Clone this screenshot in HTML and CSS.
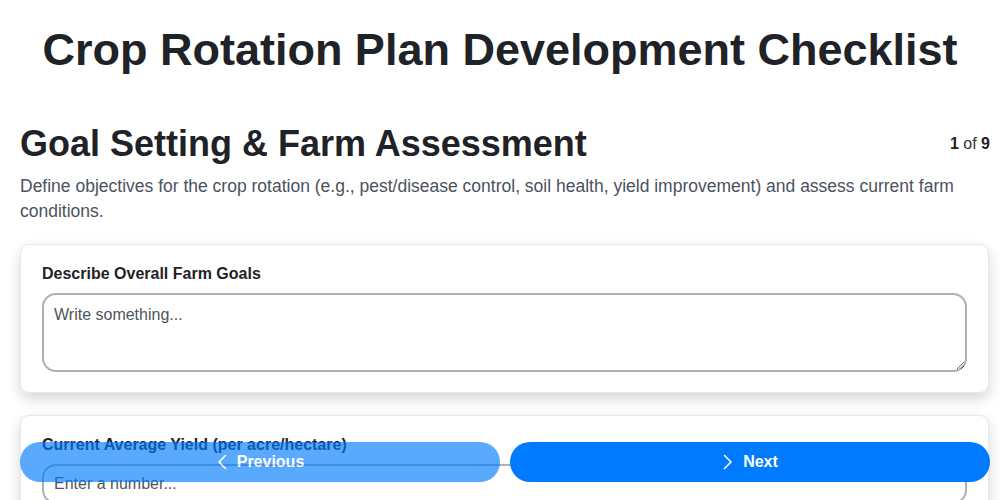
FILE: index.html
```html
<!DOCTYPE html>
<html lang="en">
<head>
<meta charset="utf-8">
<title>Crop Rotation Plan Development Checklist</title>
<link rel="stylesheet" href="styles.css">
</head>
<body>
<h1 class="title">Crop Rotation Plan Development Checklist</h1>
<main class="page">
  <section class="step">
    <header class="step-head">
      <h2 class="step-title">Goal Setting &amp; Farm Assessment</h2>
      <div class="step-count"><b>1</b> of <b>9</b></div>
    </header>
    <p class="step-desc">Define objectives for the crop rotation (e.g., pest/disease control, soil health, yield improvement) and assess current farm conditions.</p>
    <div class="fields">
      <div class="card">
        <label class="field-label" for="goals">Describe Overall Farm Goals</label>
        <textarea id="goals" class="textarea" placeholder="Write something..."></textarea>
      </div>
      <div class="card">
        <label class="field-label" for="yield">Current Average Yield (per acre/hectare)</label>
        <input id="yield" class="input" type="text" placeholder="Enter a number...">
      </div>
    </div>
  </section>
</main>
<nav class="nav">
  <button class="btn btn-prev" type="button" disabled>
    <svg class="chev" viewBox="0 0 12 16" width="12" height="16"><path d="M9.5 1.5 3 8l6.5 6.5" fill="none" stroke="currentColor" stroke-width="1.6" stroke-linecap="round" stroke-linejoin="round"/></svg>
    <span>Previous</span>
  </button>
  <button class="btn btn-next" type="button">
    <svg class="chev" viewBox="0 0 12 16" width="12" height="16"><path d="M2.5 1.5 9 8l-6.5 6.5" fill="none" stroke="currentColor" stroke-width="1.6" stroke-linecap="round" stroke-linejoin="round"/></svg>
    <span>Next</span>
  </button>
</nav>
</body>
</html>
```

FILE: styles.css
```css
* { box-sizing: border-box; }
html, body { margin: 0; padding: 0; background: #ffffff; }
body {
  font-family: "Liberation Sans", Arial, sans-serif;
  color: #212529;
  overflow: hidden;
}
.title {
  margin: 0;
  padding-top: 22px;
  text-align: center;
  font-size: 45px;
  line-height: 56px;
  font-weight: 700;
  color: #1f2226;
}
.page {
  padding: 0 10px 0 20px;
}
.step { margin-top: 44px; }
.step-head {
  display: flex;
  justify-content: space-between;
  align-items: center;
}
.step-title {
  margin: 0;
  font-size: 36px;
  line-height: 44px;
  font-weight: 700;
  color: #1f2226;
}
.step-count {
  font-size: 16px;
  color: #333;
}
.step-count b { color: #1f2226; }
.step-desc {
  margin: 8px 0 0;
  font-size: 17.5px;
  line-height: 25px;
  color: #4b5260;
}
.fields {
  margin-top: 20px;
  display: flex;
  flex-direction: column;
  gap: 22px;
  margin-right: 1px;
}
.card {
  background: #fff;
  border: 1px solid #e7e8ee;
  border-radius: 9px;
  padding: 20px 21px;
  box-shadow: 0 6px 14px rgba(0,0,0,0.16);
  display: flex;
  flex-direction: column;
}
.field-label {
  font-size: 16px;
  font-weight: 700;
  line-height: 18px;
  color: #1f2226;
  margin-bottom: 10px;
}
.textarea, .input {
  font-family: "Liberation Sans", Arial, sans-serif;
  font-size: 16px;
  color: #333;
  border: 2px solid #a9b0b8;
  border-radius: 14px;
  padding: 10px 10px;
  width: 100%;
  background: #fff;
  outline: none;
}
.textarea {
  height: 79px;
  resize: vertical;
  line-height: 19px;
}
.input { height: 40px; }
.textarea::placeholder, .input::placeholder { color: #50555c; opacity: 1; }
.nav {
  position: fixed;
  left: 20px;
  right: 10px;
  bottom: 18px;
  display: flex;
  gap: 10px;
}
.btn {
  flex: 1;
  height: 40px;
  border: none;
  border-radius: 20px;
  background: #007bff;
  color: #fff;
  font-family: "Liberation Sans", Arial, sans-serif;
  font-size: 16px;
  font-weight: 700;
  display: flex;
  align-items: center;
  justify-content: center;
  gap: 9px;
  cursor: pointer;
}
.btn-prev { opacity: 0.65; cursor: default; }
.chev { display: block; }
```
